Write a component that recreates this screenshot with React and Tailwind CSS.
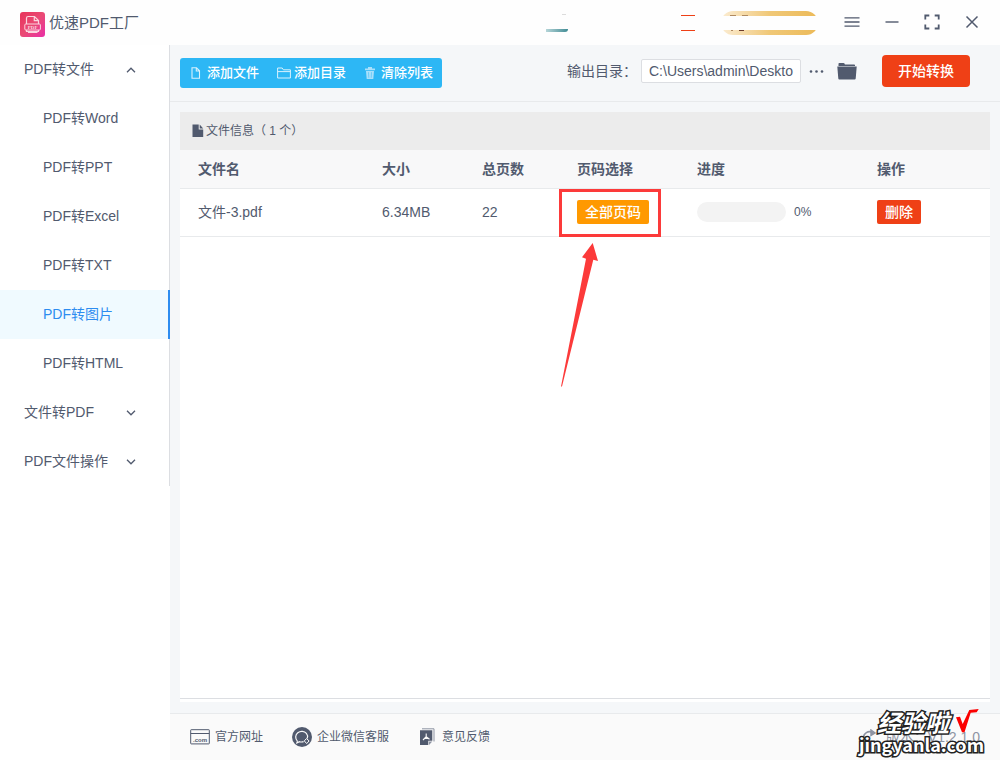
import { useState } from 'react';

const MENU = [
  {
    title: 'PDF转文件',
    items: ['PDF转Word', 'PDF转PPT', 'PDF转Excel', 'PDF转TXT', 'PDF转图片', 'PDF转HTML'],
  },
  { title: '文件转PDF', items: [] },
  { title: 'PDF文件操作', items: [] },
];

const FILES = [{ id: 1, name: '文件-3.pdf', size: '6.34MB', pages: 22, progress: 0 }];

function Chevron({ open }) {
  return (
    <svg className="w-[10px] h-[6px]" viewBox="0 0 10 6" fill="none" stroke="currentColor" strokeWidth="1.3">
      <path d={open ? 'M1 5.2 5 1.2l4 4' : 'M1 .8l4 4 4-4'} />
    </svg>
  );
}

function Logo() {
  return (
    <svg className="w-[25px] h-[25px]" viewBox="0 0 25 25" fill="none">
      <defs>
        <linearGradient id="logo" x1="0" y1="0" x2="1" y2="1">
          <stop offset="0" stopColor="#e8335a" />
          <stop offset=".5" stopColor="#ea4a74" />
          <stop offset="1" stopColor="#e92fa8" />
        </linearGradient>
      </defs>
      <rect width="25" height="25" rx="3" fill="url(#logo)" />
      <path d="M6.5 12V6.2c0-1 .6-1.7 1.6-1.7h6.4l4 4V12M14.3 4.5v4.2h4.2M6.5 18v1.5h12V18" stroke="#fbd5df" strokeWidth="1.2" />
      <rect x="4.8" y="12" width="15.6" height="6" rx="1" stroke="#fbd5df" />
      <path d="M8 20.5h9.5" stroke="#fbd5df" />
      <text x="12.6" y="17" textAnchor="middle" fontSize="5" fontWeight="700" fontFamily="Liberation Serif, serif" fill="#fbd5df">PDF</text>
    </svg>
  );
}

function Header() {
  return (
    <header className="h-[45px] bg-[#fefefe] flex items-center justify-between px-5">
      <div className="flex items-center gap-1 pt-1">
        <Logo />
        <h1 className="text-[15px] leading-5 pb-1">优速PDF工厂</h1>
      </div>
      <div className="flex items-center">
        <div className="w-[22px] h-[18px] mr-[113px] flex flex-col justify-between">
          <span className="w-1 h-px ml-4 bg-[#dcdcdc]" />
          <span className="h-[3px] rounded-br-sm bg-linear-to-r from-[#b5d5d8] to-[#3f8c95]" />
        </div>
        <div className="w-[14px] h-4 mr-[26px] border-y border-[#ee4016]" />
        <div className="h-6 w-[97px] mr-[26px] rounded-full bg-linear-to-r from-[#fbecd2] via-[#f0c877] to-[#ecba58] flex flex-col justify-center">
          <div className="flex gap-[6px] pl-[9px]">
            <span className="w-[6px] h-px bg-[#b08a60]" />
            <span className="w-[6px] h-px bg-[#b08a60]" />
          </div>
          <div className="h-[14px] bg-[#fefefe]" />
          <div className="flex gap-[6px] pl-[10px]">
            <span className="w-[2px] h-px bg-[#b08a60]" />
            <span className="w-[5px] h-px bg-[#6b3a2a]" />
          </div>
        </div>
        <div className="flex items-center gap-6 pb-[2px]">
          <button aria-label="菜单">
            <svg className="w-4 h-4" viewBox="0 0 16 16" stroke="currentColor" strokeWidth="1.3">
              <path d="M.5 3.800h15M.5 8h15M.5 12.200h15" />
            </svg>
          </button>
          <button aria-label="最小化">
            <svg className="w-4 h-4" viewBox="0 0 16 16" stroke="currentColor" strokeWidth="1.4">
              <path d="M1.500 8h13" />
            </svg>
          </button>
          <button aria-label="最大化">
            <svg className="w-4 h-4" viewBox="0 0 16 16" fill="none" stroke="currentColor" strokeWidth="1.8">
              <path d="M5.300 1.500H1.300v4M10.700 1.500h4v4M5.300 14.500h-4v-4M10.700 14.500h4v-4" />
            </svg>
          </button>
          <button aria-label="关闭">
            <svg className="w-4 h-4" viewBox="0 0 16 16" stroke="currentColor" strokeWidth="1.5">
              <path d="M2.500 2.500l11 11M13.500 2.500l-11 11" />
            </svg>
          </button>
        </div>
      </div>
    </header>
  );
}

function Sidebar({ active, onSelect }) {
  return (
    <nav className="w-[170px] shrink-0 bg-white text-sm">
      <div className="border-r border-[#dcdee2]">
        {MENU.map((group) => (
          <div key={group.title}>
            <button className="w-full h-[49px] pl-6 pr-[33px] flex items-center justify-between">
              <span className="pb-[2px]">{group.title}</span>
              <Chevron open={group.items.length > 0} />
            </button>
            {group.items.map((item) => (
              <button
                key={item}
                onClick={() => onSelect(item)}
                className={
                  item === active
                    ? 'relative block w-full h-[49px] pl-[43px] pb-[2px] text-left bg-[#f0faff] text-[#2d8cf0] after:absolute after:inset-y-0 after:-right-px after:w-[2px] after:bg-[#2d8cf0]'
                    : 'block w-full h-[49px] pl-[43px] pb-[2px] text-left'
                }
              >
                {item}
              </button>
            ))}
          </div>
        ))}
      </div>
    </nav>
  );
}

function Toolbar() {
  return (
    <div className="h-[57px] border-b border-[#e8eaec] pl-[10px] pr-[30px] flex items-center justify-between">
      <div className="h-[30px] pl-[10px] pr-[9px] rounded-[3px] bg-[#2db7f5] text-white text-[13px] font-medium flex items-center gap-[18px]">
        <button className="flex items-center gap-[5px]">
          <svg className="w-3 h-3" viewBox="0 0 12 12" fill="none" stroke="#d8f1fd" strokeWidth="1.1">
            <path d="M2 .8h4.500L9.500 3.800v7.400H2zM6.300 .8V4H9.500" />
          </svg>
          添加文件
        </button>
        <button className="flex items-center gap-[3px]">
          <svg className="w-[14px] h-3" viewBox="0 0 14 12" fill="none" stroke="#d8f1fd" strokeWidth="1">
            <path d="M.6 11V1h4.600l1.200 1.800h7V11zM.6 4.600h12.800" />
          </svg>
          添加目录
        </button>
        <button className="flex items-center gap-[5px]">
          <svg className="w-3 h-3" viewBox="0 0 12 12" fill="#a9e0fb">
            <path d="M4 0h4v1.500h3v1.700H1V1.500h3zM2 4h8l-.7 8H2.700z" />
            <path d="M4.500 5.200l.3 5.600M7.500 5.200l-.3 5.600" stroke="#2db7f5" strokeWidth=".5" />
          </svg>
          清除列表
        </button>
      </div>
      <div className="flex items-center text-sm pb-1">
        <label htmlFor="output">输出目录：</label>
        <input
          id="output"
          defaultValue="C:\Users\admin\Deskto"
          className="w-40 h-6 ml-1 pl-[7px] pr-[6px] bg-white border border-[#dcdee2] rounded-xs outline-none"
        />
        <button aria-label="选择目录" className="ml-2">
          <svg className="w-4 h-4" viewBox="0 0 16 16" fill="currentColor">
            <circle cx="2" cy="8.500" r="1.300" />
            <circle cx="7.500" cy="8.500" r="1.300" />
            <circle cx="13" cy="8.500" r="1.300" />
          </svg>
        </button>
        <button aria-label="打开目录" className="ml-3">
          <svg className="w-5 h-[18px]" viewBox="0 0 20 18" fill="currentColor">
            <path d="M1.500 4V1.800Q1.500 1 2.300 1h4.200q.7 0 1 .6l.4.900h9.300q.8 0 .8.800V4z" />
            <path d="M.3 4.600h19.400l-1 11.900q-.1.900-1 .9H2.300q-.9 0-1-.9z" />
          </svg>
        </button>
        <button className="h-8 w-[88px] ml-[25px] rounded-sm bg-[#ef4016] text-white font-medium">开始转换</button>
      </div>
    </div>
  );
}

function FileTable() {
  const th = 'h-[38px] pl-[18px] font-bold text-left';
  return (
    <table className="w-full table-fixed text-sm border-collapse">
      <thead className="bg-[#f8f8f9] border-b border-[#e8eaec]">
        <tr>
          <th className={th}>文件名</th>
          <th className={`${th} w-[100px]`}>大小</th>
          <th className={`${th} w-[95px]`}>总页数</th>
          <th className={`${th} w-[120px]`}>页码选择</th>
          <th className={`${th} w-[180px]`}>进度</th>
          <th className={`${th} w-[131px]`}>操作</th>
        </tr>
      </thead>
      <tbody>
        {FILES.map((file) => (
          <tr key={file.id} className="h-12 border-b border-[#e8eaec]">
            <td className="pl-[18px]">{file.name}</td>
            <td className="pl-[18px]">{file.size}</td>
            <td className="pl-[18px]">{file.pages}</td>
            <td className="pl-[18px] relative">
              <button className="block h-6 w-[72px] rounded-xs bg-[#ff9900] text-white font-medium">全部页码</button>
              <PageHint />
            </td>
            <td className="pl-[18px]">
              <div className="flex items-center gap-2">
                <div className="w-[89px] h-5 rounded-full bg-[#f3f3f3] overflow-hidden">
                  <div className="h-full bg-[#2d8cf0]" style={{ width: `${file.progress}%` }} />
                </div>
                <span className="text-xs">{file.progress}%</span>
              </div>
            </td>
            <td className="pl-[18px]">
              <button className="block h-6 w-11 rounded-xs bg-[#ef4016] text-white font-medium">删除</button>
            </td>
          </tr>
        ))}
      </tbody>
    </table>
  );
}

// red frame and arrow that point at the page range button
function PageHint() {
  return (
    <div className="absolute left-0 top-0 pointer-events-none">
      <div className="w-[102px] h-12 border-3 border-[#fc3a3a]" />
      <svg className="w-10 h-[144px] mt-[6px]" viewBox="0 0 40 144" fill="#fc3a3a">
        <path d="M33.700 0 39 18l-4.700-1.200L3 143.500H2L27 15.700l-4-1.400z" />
      </svg>
    </div>
  );
}

function Footer() {
  return (
    <footer className="relative h-[47px] border-t border-[#e8eaec] bg-[#fafafa] px-5 flex items-center justify-between text-xs">
      <div className="flex items-center">
        <a href="#site" className="flex items-center gap-[5px]">
          <svg className="w-5 h-4" viewBox="0 0 20 16" fill="none" stroke="currentColor" strokeWidth="1">
            <rect x=".7" y=".7" width="18.600" height="14.200" rx=".5" />
            <path d="M.7 4.500h18.600" />
            <text x="10" y="13" textAnchor="middle" fontSize="6" fontWeight="700" fill="currentColor" stroke="none">.com</text>
          </svg>
          官方网址
        </a>
        <a href="#wechat" className="flex items-center gap-[5px] ml-[29px]">
          <svg className="w-5 h-5" viewBox="0 0 20 20" fill="none">
            <circle cx="10" cy="10" r="10" fill="currentColor" />
            <path d="M5.500 14.300C2.800 11.500 3.300 7.800 5.800 5.800c2.700-2.100 6.600-1.800 8.600.6 1.300 1.600 1.500 3.500.8 5M5.500 14.300l-.6 1.500 2.700-1.100c1.300.4 2.700.4 4-.1" stroke="#fafafa" strokeWidth="1.2" />
            <path d="M14.400 11.600l2.700 2.300-2.400 2.700-2.400-2.700z" stroke="#fafafa" strokeWidth="1" />
          </svg>
          企业微信客服
        </a>
        <a href="#feedback" className="flex items-center gap-[7px] ml-[30px]">
          <svg className="w-4 h-[18px]" viewBox="0 0 16 18">
            <path d="M3 .8h12v12.700" fill="none" stroke="#8e94a3" strokeWidth="1" />
            <path d="M1 2.300h12.300v10.400H9.300V17H1z" fill="currentColor" />
            <path d="M10 17v-3.600h3.300z" fill="#8e94a3" />
            <path d="M7.200 5.500v3.200L4 12M7.200 8.700l3.300 2.600M5.500 10.500h3.800" fill="none" stroke="#fafafa" strokeWidth="1.1" />
          </svg>
          意见反馈
        </a>
      </div>
      <div className="flex items-center gap-2 text-sm text-[#8e94a3]">
        <svg className="w-4 h-4" viewBox="0 0 16 16" fill="none" stroke="currentColor" strokeWidth="1.5">
          <path d="M1.500 9a6 6 0 0 1 9-5.500" />
          <path d="M9 1l4 3-4 2.500z" fill="currentColor" />
        </svg>
        <span>版本：V1.2.1.0</span>
      </div>
      <Watermark />
    </footer>
  );
}

function Watermark() {
  return (
    <div className="absolute right-4 -top-[5px] flex flex-col items-end text-white font-bold font-['Noto_Sans_CJK_SC',sans-serif] pointer-events-none">
      <div className="flex items-start gap-[6px] pr-[5px]">
        <span className="text-2xl leading-[26px] italic [-webkit-text-stroke:3px_#222] [paint-order:stroke_fill]">经验啦</span>
        <svg className="w-6 h-6" viewBox="0 0 24 24" fill="#fb0000">
          <path d="M1 8.300l4-.6L7.700 15 14.300 1l9.400-1-2 3.300-6 .4L9.500 23.300H7z" />
        </svg>
      </div>
      <span className="text-lg leading-[18px] [-webkit-text-stroke:3px_#222] [paint-order:stroke_fill]">jingyanla.com</span>
    </div>
  );
}

export default function App() {
  const [active, setActive] = useState('PDF转图片');

  return (
    <div className="min-h-screen flex flex-col bg-white text-[#515a6e] font-['Liberation_Sans','Noto_Sans_CJK_SC',sans-serif]">
      <Header />
      <div className="flex-1 flex">
        <Sidebar active={active} onSelect={setActive} />
        <main className="flex-1 min-w-0 flex flex-col bg-[#f5f7f9]">
          <Toolbar />
          <section className="flex-1 flex flex-col mx-[10px] mt-[10px] mb-[11px] bg-white pb-[3px]">
            <div className="flex-1 border-b border-[#dcdee2]">
              <h2 className="h-[38px] px-3 flex items-center bg-[#ececec] text-xs">
                <svg className="w-3 h-[14px] mr-[2px]" viewBox="0 0 12 14" fill="currentColor">
                  <path d="M.5 .5h6.200v5h4.500V13H.5zM7.700 .5l3.500 4H7.700z" />
                </svg>
                文件信息（ 1 个）
              </h2>
              <FileTable />
            </div>
          </section>
          <Footer />
        </main>
      </div>
    </div>
  );
}
